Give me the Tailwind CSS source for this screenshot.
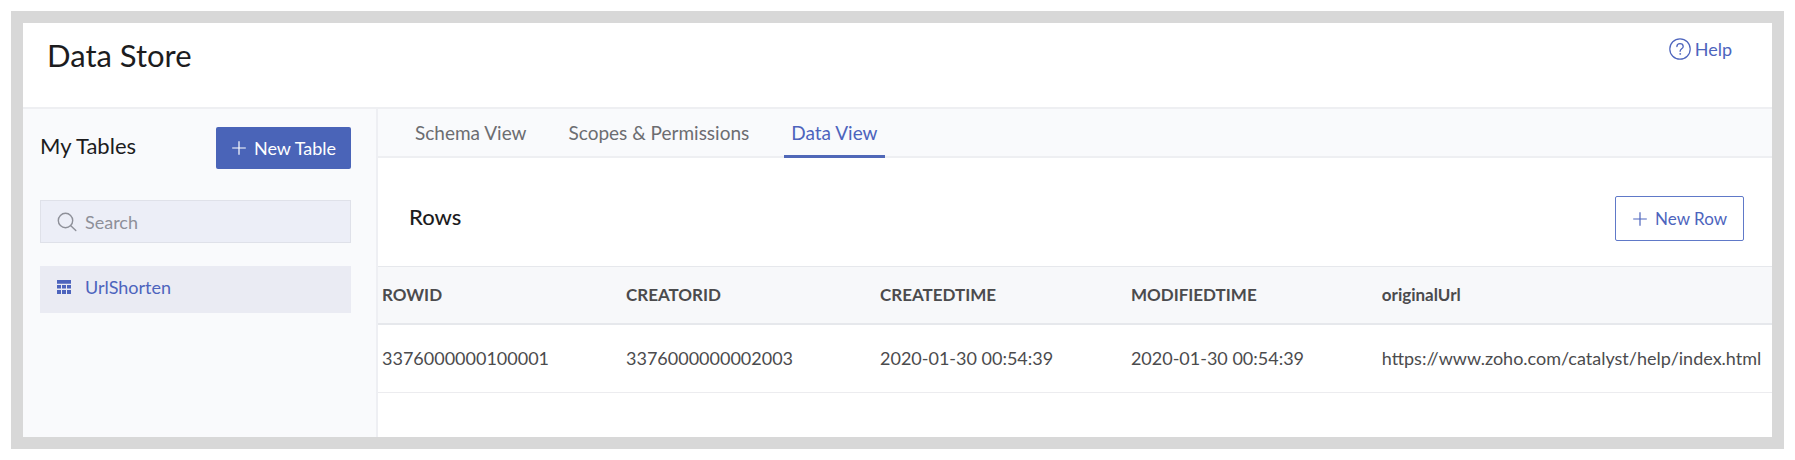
<!doctype html>
<html lang="en">
<head>
  <meta charset="UTF-8">
  <meta name="viewport" content="width=device-width, initial-scale=1.0">
  <title>Data Store</title>
  <script src="https://cdn.jsdelivr.net/npm/@tailwindcss/browser@4"></script>
</head>
<body class="bg-white font-['Lato','Open_Sans',sans-serif] text-lg leading-6 text-[#4b4b4d]">
  <div class="flex min-h-screen p-[11px]">
    <div class="flex min-w-0 flex-1 flex-col border-12 border-[#d8d8d8] bg-white">

      <!-- Header -->
      <header class="flex items-start justify-between border-b-2 border-[#eeeff2] pt-[14px] pr-10 pb-[34px] pl-6">
        <h1 class="text-[31px] leading-9 text-[#1c1c1e]">Data Store</h1>
        <a href="#" class="flex items-center gap-1 text-[#4d64bd]">
          <svg class="h-[22px] w-[22px]" viewBox="0 0 22 22" fill="none" stroke="currentColor" stroke-linecap="round">
            <circle cx="11" cy="11" r="10.2" stroke-width="1.2"/>
            <path d="M7.9 8.6c0-1.9 1.3-3 3.1-3s3.2 1.1 3.2 2.8c0 2.5-3.1 2.3-3.1 4.9" stroke-width="1.3"/>
            <circle cx="11.1" cy="15.9" r=".5" fill="currentColor" stroke-width=".6"/>
          </svg>
          Help
        </a>
      </header>
      <!-- End Header -->

      <div class="flex flex-1">
        <!-- Sidebar -->
        <aside class="w-[355px] shrink-0 border-r-2 border-[#eeeff3] bg-[#f9fafc] pt-[18px] pr-[25px] pl-[17px]">
          <div class="flex items-center justify-between">
            <h2 class="pb-1 text-[22px] leading-6 text-[#1c1c1e]">My Tables</h2>
            <button type="button" class="flex h-[42px] items-center gap-[7px] rounded-xs bg-[#4a64b8] px-[15px] text-white">
              <svg class="h-4 w-4" viewBox="0 0 16 16" fill="none" stroke="currentColor" stroke-width="1.2">
                <path d="M8 1.2v13.6M1.2 8h13.6"/>
              </svg>
              New Table
            </button>
          </div>
          <label class="mt-[31px] flex h-[43px] items-center gap-2 border border-[#dfe1e9] bg-[#eceef7] pl-4 text-[#8e9099]">
            <svg class="h-5 w-5 shrink-0" viewBox="0 0 20 20" fill="none" stroke="currentColor" stroke-width="1.4" stroke-linecap="round">
              <circle cx="8.5" cy="8.5" r="7.2"/>
              <path d="M13.8 13.8l5 4.8"/>
            </svg>
            <input type="text" aria-label="Search" placeholder="Search" class="h-8 w-full bg-transparent outline-none placeholder:text-[#8e9099]">
          </label>
          <ul class="mt-[23px]">
            <li>
              <a href="#" class="flex items-center gap-[14px] bg-[#eaebf3] pt-[9px] pr-4 pb-[14px] pl-[17px] text-[#4d64bd]">
                <svg class="h-[14px] w-[14px]" viewBox="0 0 14 14" fill="currentColor">
                  <path d="M0 0h14v3.8H0zM0 5h4v3.5H0zM5 5h4v3.5H5zM10 5h4v3.5h-4zM0 10h4v4H0zM5 10h4v4H5zM10 10h4v4h-4z"/>
                </svg>
                UrlShorten
              </a>
            </li>
          </ul>
        </aside>
        <!-- End Sidebar -->

        <!-- Content -->
        <main class="min-w-0 flex-1">
          <nav class="flex gap-7 border-b-2 border-[#eeeff2] bg-[#f9fafc] pl-[30px] text-[19px] text-[#6c6d71]">
            <a href="#" class="-mb-0.5 px-[7px] pt-3 pb-3">Schema View</a>
            <a href="#" class="-mb-0.5 px-[7px] pt-3 pb-3">Scopes &amp; Permissions</a>
            <a href="#" class="-mb-0.5 border-b-3 border-[#5068b8] px-[7px] pt-3 pb-[10px] text-[#4d64bd]">Data View</a>
          </nav>

          <div class="flex items-center justify-between pt-[38px] pr-7 pb-[25px] pl-[31px]">
            <h2 class="pb-1 text-[22px] leading-6 font-medium text-[#1c1c1e]">Rows</h2>
            <button type="button" class="flex h-[45px] items-center gap-[7px] rounded-xs border border-[#6079c8] px-4 text-[17px] text-[#4d64bd]">
              <svg class="h-4 w-4" viewBox="0 0 16 16" fill="none" stroke="currentColor" stroke-width="1.2">
                <path d="M8 1.2v13.6M1.2 8h13.6"/>
              </svg>
              New Row
            </button>
          </div>

          <table class="w-full table-fixed text-left whitespace-nowrap">
            <thead>
              <tr class="h-[57px] border-t border-b-2 border-[#e6e8ec] bg-[#f7f8fa] text-[17px]">
                <th class="w-[248px] pl-1 font-bold">ROWID</th>
                <th class="w-[254px] font-bold">CREATORID</th>
                <th class="w-[18%] font-bold">CREATEDTIME</th>
                <th class="w-[18%] font-bold">MODIFIEDTIME</th>
                <th class="font-bold">originalUrl</th>
              </tr>
            </thead>
            <tbody>
              <tr class="h-[69px] border-b border-[#ececef]">
                <td class="pl-1">3376000000100001</td>
                <td>3376000000002003</td>
                <td>2020-01-30 00:54:39</td>
                <td>2020-01-30 00:54:39</td>
                <td>https://www.zoho.com/catalyst/help/index.html</td>
              </tr>
            </tbody>
          </table>
        </main>
        <!-- End Content -->
      </div>
    </div>
  </div>
</body>
</html>
